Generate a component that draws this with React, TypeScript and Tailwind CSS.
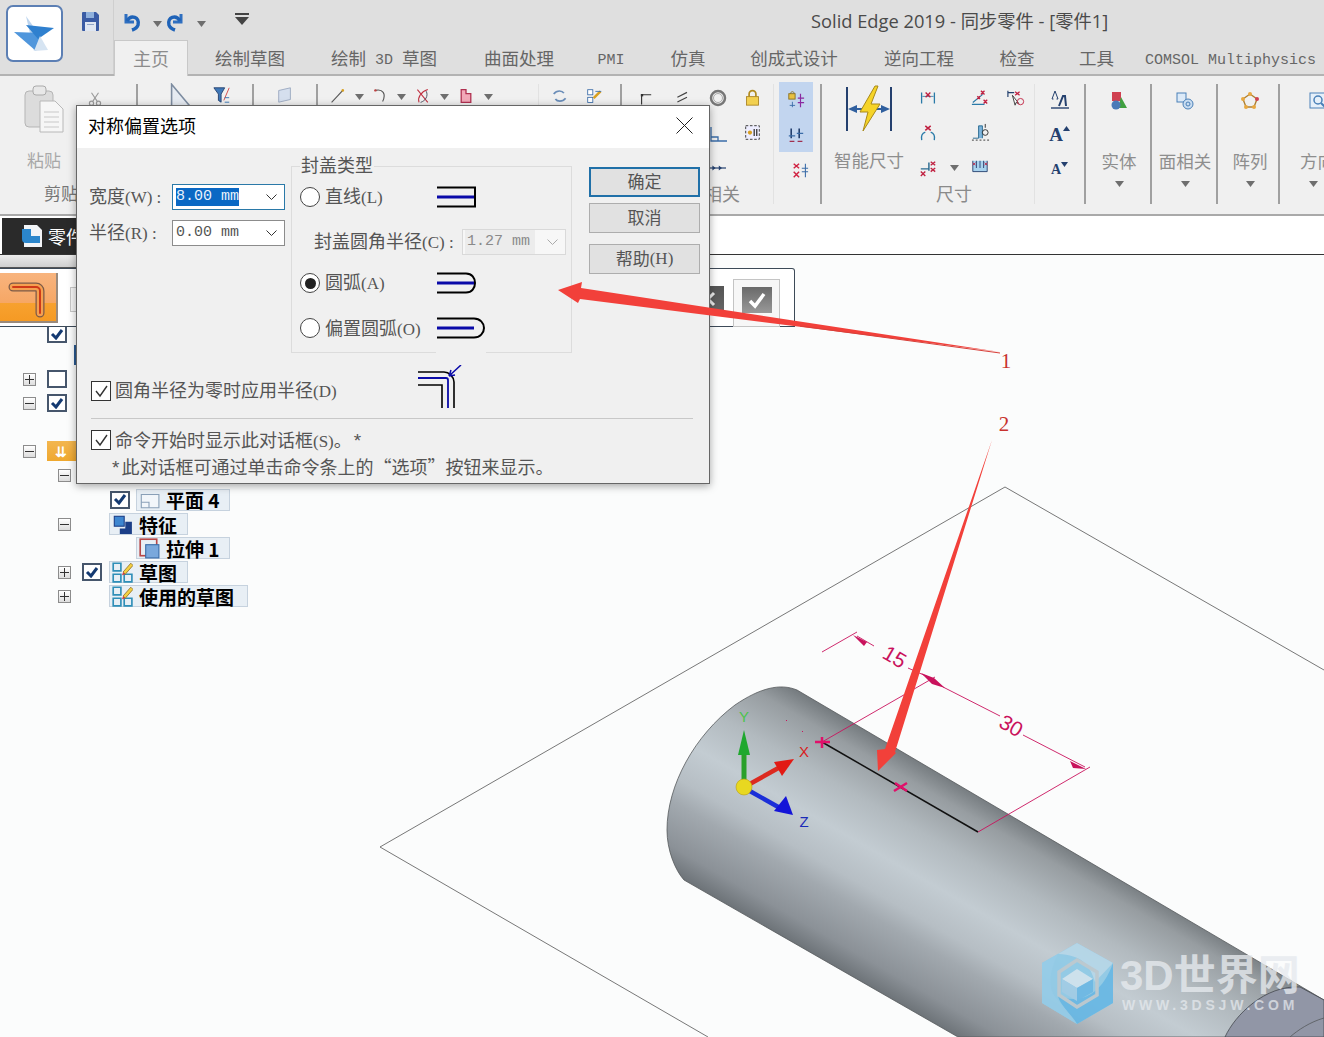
import React from "react";

const Ico: React.FC<{ s?: number; children: React.ReactNode }> = ({ s = 20, children }) => (
  <svg width={s} height={s} viewBox="0 0 20 20" fill="none" className="block shrink-0">
    {children}
  </svg>
);

const Lat: React.FC<{ children: React.ReactNode }> = ({ children }) => (
  <span className="font-['Liberation_Serif',serif] text-[17px] leading-none">{children}</span>
);

const Star = () => <span className="font-['Liberation_Mono',monospace] text-[19px] leading-none">*</span>;

const Drop = () => (
  <svg width="9" height="6" viewBox="0 0 9 6" className="block shrink-0">
    <path d="M0 0h9L4.5 6z" fill="#6e6e6e" />
  </svg>
);

const Sep = () => <div className="w-[2px] h-[120px] mt-[8px] bg-[#a0a0a0] shrink-0" />;
const FaintSep = () => <div className="w-px h-[120px] mt-[8px] bg-[#e2e2e2] shrink-0" />;

const Cell: React.FC<{ children?: React.ReactNode }> = ({ children }) => (
  <div className="h-[35px] flex items-center justify-center">{children}</div>
);

const Logo = () => (
  <svg width="46" height="42" viewBox="0 0 46 42">
    <path d="M14 3l14 20-6 15z" fill="#bcd4ee" />
    <path d="M2 19l22 19 6-18z" fill="#4f96dc" />
    <path d="M14 12L42 15 26 26z" fill="#2f80cf" />
    <path d="M28 23l8 14-14 1z" fill="#d6e4f2" />
  </svg>
);

const SmartDim = () => (
  <svg width="48" height="48" viewBox="0 0 48 48">
    <path d="M2 2v44M46 2v44" stroke="#24406e" strokeWidth="2" />
    <path d="M3 24l9-4v8zM45 24l-9-4v8z" fill="#2f5f9e" />
    <path d="M12 24h5M31 24h5" stroke="#2f5f9e" strokeWidth="2" />
    <path d="M30 1L15 27h8l-5 19 17-27h-9l7-18z" fill="#f6d428" stroke="#a8891a" strokeWidth="1" />
  </svg>
);

const BigTool: React.FC<{ w: string; label: string; icon: React.ReactNode }> = ({ w, label, icon }) => (
  <div className={`${w} shrink-0 flex flex-col items-center`}>
    <div className="h-[20px] mt-[15px]">{icon}</div>
    <div className="mt-[37px] h-[26px] text-[17.5px] leading-[26px] whitespace-nowrap text-[#8e8e8e]">{label}</div>
    <div className="mt-[7px]">
      <Drop />
    </div>
  </div>
);

const Ribbon = () => (
  <div className="h-[140px] shrink-0 bg-[#f0f0f0] border-b-2 border-[#a9a9a9] flex overflow-hidden">
    {/* clipboard */}
    <div className="w-[136px] shrink-0">
      <div className="h-[100px] flex pt-[9px] pl-[24px]">
        <div className="w-[40px] flex flex-col items-center">
          <svg width="40" height="48" viewBox="0 0 40 48">
            <rect x="1" y="6" width="28" height="36" rx="4" fill="#dcdcdc" stroke="#b5b5b5" />
            <rect x="9" y="1" width="13" height="9" rx="3" fill="#e8e8e8" stroke="#aaa" />
            <path d="M16 16h15l8 8v23H16z" fill="#f6f6f6" stroke="#b8b8b8" />
            <path d="M20 27h15M20 32h15M20 37h15M20 42h15" stroke="#c8c8c8" />
          </svg>
          <div className="mt-[15px] text-[17px] leading-[24px] text-[#a8a8a8] whitespace-nowrap">粘贴</div>
        </div>
        <div className="ml-[24px] mt-[7px]">
          <Ico s={14}>
            <path d="M5 1l8 12M15 1L7 13" stroke="#9a9a9a" strokeWidth="1.6" />
            <circle cx="5" cy="16" r="3" stroke="#9a9a9a" strokeWidth="1.6" />
            <circle cx="15" cy="16" r="3" stroke="#9a9a9a" strokeWidth="1.6" />
          </Ico>
        </div>
      </div>
      <div className="pl-[44px] pt-[5px] text-[17px] leading-[24px] text-[#777]">剪贴板</div>
    </div>
    <Sep />
    <div className="w-[114px] shrink-0 flex pt-[7px]">
      <div className="ml-[30px]">
        <Ico s={24}>
          <path d="M3 1l15 18H3z" stroke="#7d8ca0" strokeWidth="1.3" fill="#e6ebf2" />
        </Ico>
      </div>
      <div className="ml-[21px] mt-[3px]">
        <Ico s={18}>
          <path d="M1 2h12L9 9v9L6 16V9z" fill="#3f78b8" stroke="#24406e" />
          <path d="M12 16l6-14" stroke="#d04040" />
          <path d="M13 13h5M13 18h5" stroke="#3070b0" />
        </Ico>
      </div>
    </div>
    <Sep />
    <div className="w-[62px] shrink-0 flex justify-center pt-[10px]">
      <Ico s={18}>
        <path d="M3 5l13-3v13L3 18z" fill="#d5dfee" stroke="#9aa8c0" />
      </Ico>
    </div>
    <Sep />
    <div className="w-[220px] shrink-0 flex items-start pt-[12px] pl-[12px]">
      <Ico s={16}>
        <path d="M2 18L16 3" stroke="#555" strokeWidth="1.4" />
        <circle cx="16" cy="3" r="1.6" fill="#d8a020" />
      </Ico>
      <div className="ml-[9px] mt-[6px]">
        <Drop />
      </div>
      <div className="ml-[9px]">
        <Ico s={16}>
          <path d="M3 3c9-2 14 4 9 14" stroke="#555" strokeWidth="1.4" />
          <circle cx="3" cy="3" r="1.5" fill="#c04040" />
        </Ico>
      </div>
      <div className="ml-[8px] mt-[6px]">
        <Drop />
      </div>
      <div className="ml-[9px]">
        <Ico s={16}>
          <path d="M3 2l13 16M16 2C7 5 3 12 5 18" stroke="#c03040" strokeWidth="1.3" />
          <path d="M14 4c3 6-1 12-7 14" stroke="#445" strokeWidth="1.1" />
        </Ico>
      </div>
      <div className="ml-[9px] mt-[6px]">
        <Drop />
      </div>
      <div className="ml-[9px]">
        <Ico s={16}>
          <path d="M4 2h6v5h6v11H4z" fill="#f2a8b8" stroke="#b03050" strokeWidth="1.6" />
        </Ico>
      </div>
      <div className="ml-[10px] mt-[6px]">
        <Drop />
      </div>
    </div>
    <FaintSep />
    <div className="w-[81px] shrink-0 flex items-start pt-[12px] pl-[13px] gap-[17px]">
      <Ico s={17}>
        <path d="M2 7c4-5 10-4 12-1M16 12c-4 5-10 4-12 1" stroke="#6a8db8" strokeWidth="2" />
      </Ico>
      <Ico s={17}>
        <rect x="2" y="2" width="6" height="6" fill="#fff" stroke="#3a6ca8" />
        <rect x="2" y="11" width="6" height="6" fill="#fff" stroke="#3a6ca8" />
        <path d="M9 12l8-8" stroke="#d8a020" strokeWidth="3" />
        <path d="M11 4h7" stroke="#3a6ca8" />
      </Ico>
    </div>
    <Sep />
    {/* constraints */}
    <div className="w-[151px] shrink-0 flex flex-col">
      <div className="h-[100px] pt-[4px] pl-[8px] grid grid-cols-[35px_35px_35px_35px] content-start">
        <Cell>
          <Ico s={16}>
            <path d="M2 18V6h12" stroke="#333" strokeWidth="1.4" />
            <rect x="1" y="5" width="3" height="3" fill="#333" />
          </Ico>
        </Cell>
        <Cell>
          <Ico s={16}>
            <path d="M3 9l12-6M3 15l12-6" stroke="#444" strokeWidth="1.5" />
          </Ico>
        </Cell>
        <Cell>
          <Ico s={20}>
            <circle cx="10" cy="10" r="7" stroke="#777" strokeWidth="2.5" />
            <circle cx="10" cy="10" r="4.5" stroke="#aaa" strokeWidth="1" />
          </Ico>
        </Cell>
        <Cell>
          <Ico s={17}>
            <path d="M6 9V6a4 4 0 018 0v3" stroke="#b08a20" strokeWidth="2" />
            <rect x="3" y="9" width="14" height="10" fill="#f2d050" stroke="#a88020" />
          </Ico>
        </Cell>
        <Cell />
        <Cell />
        <Cell>
          <Ico s={20}>
            <path d="M3 4v14h16M3 14h7v4" stroke="#3a6ca8" strokeWidth="1.3" />
          </Ico>
        </Cell>
        <Cell>
          <Ico s={17}>
            <rect x="2" y="2" width="16" height="16" fill="#eef" stroke="#222" strokeDasharray="3 2" />
            <circle cx="7" cy="10" r="2.5" fill="#d8a020" />
            <path d="M12 6v8M15 6v8" stroke="#333" strokeWidth="1.5" />
          </Ico>
        </Cell>
        <Cell />
        <Cell />
        <Cell>
          <Ico s={16}>
            <path d="M0 10h20" stroke="#24406e" strokeWidth="1.5" />
            <path d="M3 7l4 3-4 3zM11 7l4 3-4 3z" fill="#24406e" />
          </Ico>
        </Cell>
      </div>
      <div className="pl-[82px] pt-[5px] text-[18px] leading-[24px] text-[#8a8a8a]">相关</div>
    </div>
    <FaintSep />
    <div className="w-[46px] shrink-0 pl-[5px] pt-[6px]">
      <div className="w-[34px] h-[70px] bg-[#c2d5ef]">
        <Cell>
          <Ico s={18}>
            <rect x="2" y="3" width="7" height="6" fill="#e8c040" stroke="#887020" />
            <path d="M4 3c0-3 4-3 4 0" stroke="#887020" />
            <path d="M12 8h7M12 13h7M15 3v15" stroke="#8a2aa0" strokeWidth="1.3" />
            <path d="M6 12v6M3 16h6" stroke="#3a6ca8" />
          </Ico>
        </Cell>
        <Cell>
          <Ico s={16}>
            <path d="M4 2v12M14 2v12" stroke="#24406e" strokeWidth="2" />
            <path d="M1 11h8M11 8h8" stroke="#3a6ca8" strokeWidth="1.5" />
            <path d="M2 18h6M12 18h6" stroke="#a03050" strokeWidth="1.5" />
          </Ico>
        </Cell>
      </div>
      <Cell>
        <Ico s={18}>
          <path d="M3 3l6 5M9 3L3 8M3 12l6 6M9 12l-6 6" stroke="#d02040" strokeWidth="1.6" />
          <path d="M12 8h7M12 12h7M16 3v15" stroke="#3a6ca8" strokeWidth="1.2" />
        </Ico>
      </Cell>
    </div>
    <Sep />
    {/* dimensions */}
    <div className="w-[212px] shrink-0 flex flex-col">
      <div className="h-[100px] flex pl-[2px]">
        <div className="w-[90px] shrink-0 flex flex-col items-center pt-[9px]">
          <SmartDim />
          <div className="mt-[14px] text-[17.5px] leading-[26px] text-[#8e8e8e] whitespace-nowrap">智能尺寸</div>
        </div>
        <div className="w-[28px] pt-[4px] shrink-0">
          <Cell>
            <Ico s={16}>
              <path d="M2 3v14M18 3v14" stroke="#2a7aa8" strokeWidth="1.6" />
              <path d="M3 8h14" stroke="#2a7aa8" />
              <path d="M7 3l6 6M13 3L7 9" stroke="#c02040" strokeWidth="1.7" />
            </Ico>
          </Cell>
          <Cell>
            <Ico s={18}>
              <path d="M3 18c-1-5 1-8 4-9M17 18c1-5-1-8-4-9" stroke="#2a7aa8" strokeWidth="1.5" />
              <path d="M7 2l6 5M13 2L7 7" stroke="#c02040" strokeWidth="1.7" />
            </Ico>
          </Cell>
          <Cell>
            <Ico s={18}>
              <path d="M2 11h9M11 4v9" stroke="#2a6a90" strokeWidth="1.6" />
              <path d="M13 3l5 4M18 3l-5 4M13 10l5 4M18 10l-5 4M2 14l5 5M7 14l-5 5" stroke="#c02040" strokeWidth="1.5" />
            </Ico>
          </Cell>
        </div>
        <div className="w-[24px] pt-[4px] shrink-0">
          <Cell />
          <Cell />
          <Cell>
            <Drop />
          </Cell>
        </div>
        <div className="w-[28px] pt-[4px] shrink-0">
          <Cell>
            <Ico s={18}>
              <path d="M1 17h14M2 15L13 6" stroke="#2a7aa8" strokeWidth="1.3" />
              <path d="M11 2l4 4M15 2l-4 4M14 12l4 4M18 12l-4 4M7 8l3 3M10 8l-3 3" stroke="#c02040" strokeWidth="1.5" />
            </Ico>
          </Cell>
          <Cell>
            <Ico s={19}>
              <path d="M2 16h6V3h4v13" fill="#7db4dc" stroke="#2a6a90" />
              <path d="M1 18h18" stroke="#333" strokeDasharray="2 2" />
              <circle cx="15" cy="10" r="3" stroke="#333" />
              <path d="M15 1v4" stroke="#333" />
            </Ico>
          </Cell>
          <Cell>
            <Ico s={18}>
              <path d="M2 2v12h16V2" fill="#a8d2ee" stroke="#24406e" />
              <path d="M6 2v8M10 2v8M14 2v8" stroke="#24406e" />
              <path d="M2 4l3 3M5 4L2 7M15 4l3 3M18 4l-3 3" stroke="#c02040" />
            </Ico>
          </Cell>
        </div>
        <div className="w-[36px] pt-[4px] pl-[8px] shrink-0">
          <Cell>
            <Ico s={18}>
              <path d="M1 2v7M1 4h7" stroke="#24406e" strokeWidth="1.3" />
              <path d="M9 3l5 4M14 3L9 7" stroke="#c02040" strokeWidth="1.4" />
              <path d="M6 7l7 9-3-1-1 3z" fill="#fff" stroke="#333" />
              <circle cx="15" cy="14" r="3.5" stroke="#c02040" />
            </Ico>
          </Cell>
        </div>
      </div>
      <div className="pl-[114px] pt-[5px] text-[18px] leading-[24px] text-[#8a8a8a]">尺寸</div>
    </div>
    <FaintSep />
    <div className="w-[49px] shrink-0 pt-[6px] flex flex-col items-center font-['Liberation_Serif',serif] font-bold text-[#24406e]">
      <Cell>
        <Ico s={20}>
          <path d="M5 1L2 9h1.5M5 1l3 8H6.5" stroke="#24406e" />
          <path d="M9 16l4-10h2l1 10" stroke="#24406e" strokeWidth="2" />
          <path d="M1 18h18" stroke="#24406e" strokeWidth="1.4" />
        </Ico>
      </Cell>
      <Cell>
        <span className="text-[19px] leading-none">A</span>
        <svg width="7" height="5" viewBox="0 0 7 5" className="-mt-[12px]">
          <path d="M0 5l3.5-5L7 5z" fill="#24406e" />
        </svg>
      </Cell>
      <Cell>
        <span className="text-[14px] leading-none">A</span>
        <svg width="7" height="5" viewBox="0 0 7 5" className="-mt-[10px]">
          <path d="M0 0h7L3.500 5z" fill="#24406e" />
        </svg>
      </Cell>
    </div>
    <Sep />
    <BigTool
      w="w-[64px] pl-[2px]"
      label="实体"
      icon={
        <Ico s={20}>
          <rect x="3" y="1" width="9" height="9" fill="#d04050" />
          <path d="M12 6l6 11H9z" fill="#40a040" />
          <circle cx="7" cy="14" r="4.500" fill="#4a7ab8" />
        </Ico>
      }
    />
    <Sep />
    <BigTool
      w="w-[64px] pl-[2px]"
      label="面相关"
      icon={
        <Ico s={20}>
          <rect x="2" y="2" width="9" height="9" fill="#dceaf8" stroke="#4a80b8" />
          <circle cx="13" cy="13" r="5" fill="#c8dcf0" stroke="#4a80b8" />
          <circle cx="13" cy="13" r="2" stroke="#4a80b8" />
        </Ico>
      }
    />
    <Sep />
    <BigTool
      w="w-[60px] pl-[4px]"
      label="阵列"
      icon={
        <Ico s={20}>
          <path d="M10 3l7 5-3 8H6L3 8z" stroke="#b08030" strokeWidth="1.4" />
          <circle cx="10" cy="3" r="2" fill="#e8a840" />
          <circle cx="17" cy="8" r="2" fill="#d04050" />
          <circle cx="14" cy="16" r="2" fill="#e8a840" />
          <circle cx="6" cy="16" r="2" fill="#e8a840" />
          <circle cx="3" cy="8" r="2" fill="#e8a840" />
        </Ico>
      }
    />
    <Sep />
    <div className="w-[60px] shrink-0 pt-[15px] pl-[20px]">
      <div className="ml-[9px]">
        <Ico s={20}>
          <rect x="1" y="2" width="18" height="15" fill="#e6f0fa" stroke="#4a80b8" />
          <circle cx="9" cy="9" r="4" stroke="#4a80b8" strokeWidth="1.5" />
          <path d="M12 12l4 4" stroke="#4a80b8" strokeWidth="2" />
        </Ico>
      </div>
      <div className="mt-[37px] h-[26px] text-[17.5px] leading-[26px] whitespace-nowrap text-[#8e8e8e]">方向</div>
      <div className="mt-[7px] ml-[9px]">
        <Drop />
      </div>
    </div>
  </div>
);

const MONO_TAB = "block pt-[5px] leading-[20px] font-['Liberation_Mono',monospace] text-[15px]";

const TITLE_TABS = [
  { label: "绘制草图", w: "w-[124px]" },
  {
    label: (
      <>
        绘制<span className={`${MONO_TAB} mx-[9px]`}>3D</span>草图
      </>
    ),
    w: "w-[144px]",
  },
  { label: "曲面处理", w: "w-[126px]" },
  { label: <span className={MONO_TAB}>PMI</span>, w: "w-[58px]" },
  { label: "仿真", w: "w-[96px]" },
  { label: "创成式设计", w: "w-[116px]" },
  { label: "逆向工程", w: "w-[134px]" },
  { label: "检查", w: "w-[62px]" },
  { label: "工具", w: "w-[97px]" },
  { label: <span className={MONO_TAB}>COMSOL Multiphysics</span>, w: "w-[171px]" },
];

const Header = () => (
  <div className="h-[76px] shrink-0 bg-[#dfdfdf] border-b-2 border-[#b3b3b3] flex">
    <div className="w-[113px] shrink-0 flex items-start pl-[6px] pt-[5px]">
      <div className="w-[57px] h-[57px] rounded-[7px] bg-white border-2 border-[#5c7fb4] flex items-center justify-center">
        <Logo />
      </div>
      <div className="ml-[19px] mt-[7px]">
        <svg width="17" height="19" viewBox="0 0 17 19">
          <path d="M1 0h13l3 3v15a1 1 0 01-1 1H1a1 1 0 01-1-1V1a1 1 0 011-1z" fill="#3a5ba4" />
          <rect x="4" y="0" width="8" height="6" fill="#8fb0dc" />
          <rect x="3" y="10" width="11" height="9" fill="#dfe6f2" />
          <rect x="5" y="12" width="7" height="1" fill="#8fa4c8" />
        </svg>
      </div>
    </div>
    <div className="flex-1 flex flex-col border-l border-[#cfcfcf]">
      <div className="h-[40px] flex items-start">
        <div className="ml-[8px] mt-[11px]">
          <svg width="19" height="21" viewBox="0 0 19 21">
            <path d="M4 3v8h8" stroke="#2f6fc0" strokeWidth="3" fill="none" />
            <path d="M5 10c4-7 13-4 11 4-1 3-3 4-6 5" stroke="#1f63b8" strokeWidth="3.500" fill="none" />
          </svg>
        </div>
        <div className="ml-[12px] mt-[21px]">
          <Drop />
        </div>
        <div className="ml-[4px] mt-[11px]">
          <svg width="19" height="21" viewBox="0 0 19 21">
            <path d="M15 3v8H7" stroke="#2f6fc0" strokeWidth="3" fill="none" />
            <path d="M14 10C10 3 1 6 3 14c1 3 3 4 6 5" stroke="#1f63b8" strokeWidth="3.500" fill="none" />
          </svg>
        </div>
        <div className="ml-[12px] mt-[21px]">
          <Drop />
        </div>
        <div className="ml-[29px] mt-[13px]">
          <svg width="14" height="12" viewBox="0 0 14 12">
            <path d="M0 0h14v2H0zM0 4h14L7 12z" fill="#444" />
          </svg>
        </div>
        <div className="ml-[562px] mt-[8px] font-['Open_Sans','Noto_Sans_CJK_SC',sans-serif] text-[#4a4a4a] text-[18.3px] leading-[26px] whitespace-nowrap">
          Solid Edge 2019 - 同步零件 - [零件1]
        </div>
      </div>
      <div className="h-[34px] flex items-start">
        <div className="w-[74px] h-[36px] bg-[#f0f0f0] border border-b-0 border-[#c8c8c8] flex items-center justify-center text-[18px] text-[#8c8c8c]">
          主页
        </div>
        {TITLE_TABS.map((t, i) => (
          <div key={i} className={`${t.w} h-[36px] flex items-center justify-center text-[17.5px] whitespace-nowrap text-[#666]`}>
            {t.label}
          </div>
        ))}
      </div>
    </div>
  </div>
);

const DocBar = () => (
  <>
    <div className="h-[39px] shrink-0 bg-white pt-[2px] pl-[2px] border-b border-[#333]">
      <div className="w-[300px] h-[36px] bg-[#2a2a2a] flex items-center pl-[20px] gap-[5px] text-white text-[18px]">
        <svg width="21" height="24" viewBox="0 0 21 24">
          <path d="M2 1h13l5 5v17H2z" fill="#f2f4f7" />
          <path d="M0 5h9v7h9v7H4a4 4 0 01-4-4z" fill="#2b86cc" />
        </svg>
        零件1
      </div>
    </div>
    <div className="h-[72px] shrink-0 bg-[#fbfcfc]">
      <div className="w-[400px] h-[13px] bg-gradient-to-b from-[#ececec] to-[#cfcfcf] border-b border-[#555]" />
      <div className="w-[795px] h-[59px] bg-white border-y border-r border-[#3d4a58] rounded-tr-[3px] flex items-start justify-between">
        <div className="flex items-start pt-[4px]">
          <div className="w-[58px] h-[50px] bg-[linear-gradient(#f8b47e_0%,#f6a765_62%,#f7a12f_63%,#f59a24_100%)] border-r-2 border-b-2 border-[#9a8a7c] flex items-center justify-center">
            <svg width="46" height="44" viewBox="0 0 46 44" fill="none">
              <path d="M8 12H31a4 4 0 014 4V38" stroke="#7b5a48" strokeWidth="9" strokeLinecap="round" />
              <path d="M8 12H31a4 4 0 014 4V38" stroke="#f5a050" strokeWidth="6.500" strokeLinecap="round" />
              <path d="M8 12H31a4 4 0 014 4V38" stroke="#d03a18" strokeWidth="2" strokeLinecap="round" />
            </svg>
          </div>
          <div className="ml-[12px] mt-[14px] w-[80px] h-[25px] border border-[#c8c8c8] bg-[#f6f6f6]" />
        </div>
        <div className="flex items-start pr-[14px]">
          <div className="mt-[17px] w-[26px] h-[26px] bg-gradient-to-b from-[#555] to-[#666] flex items-center justify-center">
            <svg width="12" height="16" viewBox="0 0 12 16" fill="none">
              <path d="M9 2L3 8l6 6" stroke="#eee" strokeWidth="3" />
            </svg>
          </div>
          <div className="ml-[9px] mt-[10px] w-[47px] h-[48px] border border-[#c4c4c4] bg-[#f7f7f7] flex justify-center pt-[7px]">
            <div className="w-[30px] h-[26px] bg-gradient-to-b from-[#6a6a6a] to-[#999] flex items-center justify-center">
              <svg width="20" height="18" viewBox="0 0 20 18" fill="none">
                <path d="M3 10l5 5L17 3" stroke="#fff" strokeWidth="3.500" />
              </svg>
            </div>
          </div>
        </div>
      </div>
    </div>
  </>
);

const Expander: React.FC<{ plus?: boolean }> = ({ plus }) => (
  <div className="w-[13px] h-[13px] shrink-0 border border-[#8c8c8c] bg-gradient-to-b from-[#fff] to-[#ddd] flex items-center justify-center">
    <svg width="9" height="9" viewBox="0 0 9 9">
      <path d={plus ? "M0 4.500h9M4.500 0v9" : "M0 4.500h9"} stroke="#333" strokeWidth="1" />
    </svg>
  </div>
);

const TreeCheck: React.FC<{ on?: boolean }> = ({ on }) => (
  <div className="w-[20px] h-[18px] shrink-0 border-2 border-[#46566c] bg-white flex items-center justify-center">
    {on && (
      <svg width="14" height="11" viewBox="0 0 14 11" fill="none">
        <path d="M2 5l4 4 6-8" stroke="#143a72" strokeWidth="3" />
      </svg>
    )}
  </div>
);

const NodeLabel: React.FC<{ icon: React.ReactNode; text: string; w: string }> = ({ icon, text, w }) => (
  <div className={`${w} h-[22px] shrink-0 bg-[#e8eff5] border border-[#c6d2de] flex items-center pl-[1px] gap-[6px] font-bold text-[19px] leading-none text-black whitespace-nowrap`}>
    {icon}
    {text}
  </div>
);

const SketchIcon = () => (
  <Ico s={22}>
    <path d="M2 2h7v7H2zM2 12h7v7H2zM12 12h7v7h-7z" stroke="#2f8fb8" strokeWidth="1.500" />
    <path d="M11 10l7-8 2 2-7 8z" fill="#f4d040" stroke="#8a6a20" strokeWidth="0.700" />
    <path d="M11 10l-1 3 3-1" fill="#d04040" />
  </Ico>
);

const Tree = () => (
  <div className="relative flex flex-col">
    <div className="h-[16px] pl-[47px] overflow-hidden flex items-end">
      <TreeCheck on />
    </div>
    <div className="h-[24px] pl-[74px] flex items-center">
      <div className="w-[4px] h-[20px] border-l-2 border-y border-[#2a5a90]" />
    </div>
    <div className="h-[24px] pl-[23px] flex items-center">
      <Expander plus />
      <div className="ml-[11px]">
        <TreeCheck />
      </div>
    </div>
    <div className="h-[24px] pl-[23px] flex items-center">
      <Expander />
      <div className="ml-[11px]">
        <TreeCheck on />
      </div>
    </div>
    <div className="h-[24px]" />
    <div className="h-[24px] pl-[23px] flex items-center">
      <Expander />
      <div className="ml-[11px] w-[32px] h-[20px] bg-gradient-to-b from-[#f3b64e] to-[#efa82e] flex items-center pl-[8px] text-white font-bold text-[14px] leading-none">
        ⇊
      </div>
    </div>
    <div className="h-[24px] pl-[58px] flex items-center">
      <Expander />
    </div>
    <div className="h-[25px] pl-[110px] flex items-center">
      <TreeCheck on />
      <div className="ml-[6px]">
        <NodeLabel
          w="w-[94px]"
          text="平面 4"
          icon={
            <Ico s={22}>
              <path d="M3 5h16v12H3z" fill="#f2f6fa" stroke="#8aa0b8" />
              <path d="M3 12h7v5" stroke="#8aa0b8" />
            </Ico>
          }
        />
      </div>
    </div>
    <div className="h-[24px] pl-[58px] flex items-center">
      <Expander />
      <div className="ml-[38px]">
        <NodeLabel
          w="w-[79px]"
          text="特征"
          icon={
            <Ico s={22}>
              <rect x="3" y="3" width="9" height="9" fill="#3e86d0" stroke="#1c3f88" />
              <path d="M13 8h6v11H8v-5h5z" fill="#1c3f88" />
            </Ico>
          }
        />
      </div>
    </div>
    <div className="h-[24px] pl-[136px] flex items-center">
      <NodeLabel
        w="w-[94px]"
        text="拉伸 1"
        icon={
          <Ico s={22}>
            <rect x="2" y="2" width="15" height="15" stroke="#b84848" strokeWidth="1.500" />
            <rect x="7" y="7" width="12" height="12" fill="#7aa8dc" stroke="#3a6ca8" />
          </Ico>
        }
      />
    </div>
    <div className="h-[24px] pl-[58px] flex items-center">
      <Expander plus />
      <div className="ml-[11px]">
        <TreeCheck on />
      </div>
      <div className="ml-[7px]">
        <NodeLabel w="w-[79px]" text="草图" icon={<SketchIcon />} />
      </div>
    </div>
    <div className="h-[24px] pl-[58px] flex items-center">
      <Expander plus />
      <div className="ml-[38px]">
        <NodeLabel w="w-[139px]" text="使用的草图" icon={<SketchIcon />} />
      </div>
    </div>
  </div>
);

const DIM = "#c9125c";

const Model = () => (
  <svg className="absolute inset-0 w-full h-full" viewBox="0 327 1324 710" fill="none">
    <defs>
      <linearGradient id="cyl" gradientUnits="userSpaceOnUse" x1="900" y1="749" x2="790" y2="940">
        <stop offset="0" stopColor="#747a7e" />
        <stop offset="0.1" stopColor="#979da1" />
        <stop offset="0.28" stopColor="#b2babf" />
        <stop offset="0.46" stopColor="#c3ccd2" />
        <stop offset="0.62" stopColor="#b6bec4" />
        <stop offset="0.72" stopColor="#a2a9af" />
        <stop offset="0.9" stopColor="#8b9197" />
        <stop offset="1" stopColor="#6e7479" />
      </linearGradient>
    </defs>
    <path d="M1005 487L380 847L708 1037M1005 487L1324 670" stroke="#555" strokeWidth="0.8" />
    <path
      d="M797 690C780 683 760 688 735 705C695 735 667 785 667 830C667 850 675 870 684 880L958 1037H1324V1000Z"
      fill="url(#cyl)"
      stroke="#55595c"
      strokeWidth="0.8"
    />
    <path d="M1225 1037C1235 1015 1265 985 1300 987L1324 1000V1037Z" fill="#9196a6" stroke="#44484e" strokeWidth="0.8" />
    <path d="M1290 1037C1298 1030 1310 1022 1324 1018" stroke="#55595c" strokeWidth="0.8" />
    {/* sketch line + dimensions */}
    <path d="M822 742L978 832" stroke="#111" strokeWidth="1.500" />
    <g stroke={DIM} strokeWidth="0.9">
      <path d="M822 652L857 632M822 742L935 677M978 832L1090 767" />
      <path d="M857 636L874 646M908 668L935 680M943 687L1000 716M1023 735L1085 767" />
    </g>
    <path d="M853 635L867 642L864 646Z M921 673L934 678L945 688L932 684Z M1070 761L1086 769L1073 768Z" fill={DIM} />
    <path d="M815 742H830M822 737V748M894 791L907 783M895 783L907 791" stroke="#e0106a" strokeWidth="2.500" />
    <text x="894" y="664" transform="rotate(30 894 658)" textAnchor="middle" fontSize="21" fill={DIM} fontFamily="Liberation Sans, sans-serif">
      15
    </text>
    <text x="1011" y="733" transform="rotate(30 1011 726)" textAnchor="middle" fontSize="21" fill={DIM} fontFamily="Liberation Sans, sans-serif">
      30
    </text>
    <path d="M786 720l1 1M802 731l1 1" stroke={DIM} />
    {/* triad */}
    <path d="M744 785V750" stroke="#2aa02a" strokeWidth="5" />
    <path d="M744 730L750 755H738Z" fill="#1fa82e" />
    <path d="M748 785L782 766" stroke="#dc2a20" strokeWidth="4.500" />
    <path d="M794 759L774 762L782 776Z" fill="#e21a14" />
    <path d="M748 790L780 808" stroke="#1b2fd8" strokeWidth="4.500" />
    <path d="M793 815L786 796L774 811Z" fill="#1414d8" />
    <circle cx="744" cy="787" r="8" fill="#e8d820" stroke="#b8a010" strokeWidth="0.600" />
    <g fontSize="15" fontFamily="Liberation Sans, sans-serif" textAnchor="middle">
      <text x="744" y="722" fill="#4cc44c">Y</text>
      <text x="804" y="757" fill="#d82020">X</text>
      <text x="804" y="827" fill="#1a2ab8">Z</text>
    </g>
    {/* watermark */}
    <g opacity="0.9">
      <path d="M1077 943L1113 963V1003L1077 1024L1042 1003V963Z" fill="#8fcbe8" />
      <path d="M1077 943L1113 963L1095 982C1090 965 1082 955 1058 954Z" fill="#b5d8ea" />
      <path d="M1113 963V1003L1077 1024C1072 1015 1060 1005 1058 996C1075 1003 1100 1000 1113 963Z" fill="#65b8e6" />
      <path d="M1042 963L1058 954C1048 975 1048 990 1058 1000L1077 1024L1042 1003Z" fill="#93cdea" />
      <path d="M1077 960L1097 972V995L1077 1007L1059 995V972Z" stroke="#bcc9d0" strokeWidth="3.500" />
      <path d="M1077 969L1093 979L1077 988L1062 979Z" fill="#cfe4f0" />
      <path d="M1062 979L1077 988V1001L1062 992Z" fill="#9fcde8" />
      <path d="M1093 979L1077 988V1001L1093 992Z" fill="#68b8e6" />
    </g>
    <text x="1120" y="990" fontSize="42" fontWeight="700" fill="#e6eaee" opacity="0.78" fontFamily="Liberation Sans, Noto Sans CJK SC, sans-serif">
      3D世界网
    </text>
    <text x="1122" y="1010" fontSize="14" fontWeight="700" letterSpacing="3.800" fill="#e6eaee" opacity="0.72" fontFamily="Liberation Sans, sans-serif">
      WWW.3DSJW.COM
    </text>
  </svg>
);

const Radio: React.FC<{ on?: boolean }> = ({ on }) => (
  <div className="w-[20px] h-[20px] shrink-0 rounded-full border border-[#444] bg-white flex items-center justify-center">
    {on && <div className="w-[11px] h-[11px] rounded-full bg-[#222]" />}
  </div>
);

const DlgCheck = () => (
  <div className="w-[20px] h-[20px] shrink-0 border border-[#333] bg-white flex items-center justify-center">
    <svg width="15" height="13" viewBox="0 0 15 13" fill="none">
      <path d="M2 6l4 5 7-10" stroke="#333" strokeWidth="1.400" />
    </svg>
  </div>
);

const Chevron: React.FC<{ color?: string }> = ({ color = "#333" }) => (
  <svg width="11" height="7" viewBox="0 0 11 7" fill="none" className="shrink-0">
    <path d="M0.500 0.500l5 5 5-5" stroke={color} />
  </svg>
);

const CapIcon: React.FC<{ kind: "line" | "arc" | "offset" }> = ({ kind }) => (
  <svg width="50" height="22" viewBox="0 0 50 22" fill="none" className="shrink-0">
    {kind === "line" && <path d="M0 1.500H38V20.500H0" stroke="#000" strokeWidth="2" />}
    {kind === "arc" && <path d="M0 1.500H29C35 1.500 38 6 38 11S35 20.500 29 20.500H0" stroke="#000" strokeWidth="2" />}
    {kind === "offset" && <path d="M0 1.500H37C43 1.500 47 6 47 11S43 20.500 37 20.500H0" stroke="#000" strokeWidth="2" />}
    <path d="M0 11H37" stroke="#0a0aa8" strokeWidth="3" />
  </svg>
);

const BTN = "w-[111px] h-[30px] pb-[2px] bg-[#e1e1e1] flex items-center justify-center text-[17px] text-[#555]";

const Dialog = () => (
  <div className="absolute left-[76px] top-[105px] w-[634px] h-[379px] bg-[#f0f0f0] border border-[#666] shadow-[0_2px_8px_rgba(0,0,0,0.35)] text-[18px] leading-[24px] text-[#555]">
    <div className="h-[42px] bg-white flex items-center justify-between pb-[4px] pl-[11px] pr-[16px] text-black">
      <span>对称偏置选项</span>
      <svg width="17" height="17" viewBox="0 0 17 17" fill="none">
        <path d="M0.500 0.500l16 16M16.500 0.500l-16 16" stroke="#222" />
      </svg>
    </div>
    <div className="flex h-[205px]">
      <div className="ml-[12px] w-[196px] pt-[36px] flex flex-col gap-[10px]">
        <div className="h-[26px] flex items-center">
          <div className="w-[83px] pb-[4px] whitespace-nowrap">
            宽度<Lat>(W) :</Lat>
          </div>
          <div className="w-[113px] h-[26px] bg-white border border-[#2a79a8] flex items-center justify-between pl-[3px] pr-[7px]">
            <span className="bg-[#0a68c4] text-[#e8f2fc] font-['Liberation_Mono',monospace] text-[15px] leading-[18px] whitespace-nowrap">8.00 mm</span>
            <Chevron />
          </div>
        </div>
        <div className="h-[26px] flex items-center">
          <div className="w-[83px] pb-[4px] whitespace-nowrap">
            半径<Lat>(R) :</Lat>
          </div>
          <div className="w-[113px] h-[26px] bg-white border border-[#8c8c8c] flex items-center justify-between pl-[3px] pr-[7px]">
            <span className="font-['Liberation_Mono',monospace] text-[15px] whitespace-nowrap">0.00 mm</span>
            <Chevron />
          </div>
        </div>
      </div>
      <div className="relative ml-[6px] mt-[18px] w-[281px] h-[187px] border border-[#dcdcdc] pt-[17px]">
        <div className="absolute -top-[15px] left-[8px] bg-[#f0f0f0] px-[1px]">封盖类型</div>
        <div className="h-[26px] pl-[8px] flex items-center">
          <Radio />
          <div className="ml-[5px] w-[112px] pb-[4px] whitespace-nowrap">
            直线<Lat>(L)</Lat>
          </div>
          <CapIcon kind="line" />
        </div>
        <div className="mt-[19px] h-[26px] pl-[22px] flex items-center">
          <div className="w-[148px] pb-[4px] whitespace-nowrap">
            封盖圆角半径<Lat>(C) :</Lat>
          </div>
          <div className="w-[104px] h-[26px] bg-[#f7f7f7] border border-[#d9d9d9] flex items-center justify-between pl-[2px] pr-[7px]">
            <span className="bg-[#ececec] w-[70px] pl-[2px] font-['Liberation_Mono',monospace] text-[15px] text-[#8a8a8a] whitespace-nowrap">1.27 mm</span>
            <Chevron color="#aaa" />
          </div>
        </div>
        <div className="mt-[15px] h-[26px] pl-[8px] flex items-center">
          <Radio on />
          <div className="ml-[5px] w-[112px] pb-[4px] whitespace-nowrap">
            圆弧<Lat>(A)</Lat>
          </div>
          <CapIcon kind="arc" />
        </div>
        <div className="mt-[19px] h-[26px] pl-[8px] flex items-center">
          <Radio />
          <div className="ml-[5px] w-[112px] pb-[2px] whitespace-nowrap">
            偏置圆弧<Lat>(O)</Lat>
          </div>
          <CapIcon kind="offset" />
        </div>
        <div className="absolute -bottom-[1px] left-[144px] w-[50px] h-px bg-[#f0f0f0]" />
      </div>
      <div className="ml-[17px] mt-[19px] flex flex-col">
        <div className={`${BTN} border-2 border-[#2070a8]`}>确定</div>
        <div className={`${BTN} border border-[#adadad] mt-[6px]`}>取消</div>
        <div className={`${BTN} border border-[#adadad] mt-[11px]`}>
          帮助<Lat>(H)</Lat>
        </div>
      </div>
    </div>
    <div className="mt-[12px] h-[43px] pl-[14px] flex items-start">
      <div className="mt-[16px]">
        <DlgCheck />
      </div>
      <div className="ml-[4px] mt-[12px] w-[303px] whitespace-nowrap">
        圆角半径为零时应用半径<Lat>(D)</Lat>
      </div>
      <svg width="44" height="43" viewBox="0 0 44 43" fill="none" className="shrink-0">
        <path d="M0 7H26C31 7 36 12 36 17V43M0 20H24V43" stroke="#000" strokeWidth="1.600" />
        <path d="M0 13H28C29 13 30 14 30 15V43" stroke="#0a0aa8" strokeWidth="1.800" />
        <path d="M43 0L31 11M31 11l2-6M31 11l6-1" stroke="#0a0aa8" strokeWidth="1.500" />
      </svg>
    </div>
    <div className="mt-[10px] ml-[14px] w-[602px] border-t border-[#c8c8c8]" />
    <div className="mt-[9px] h-[24px] pl-[14px] flex items-center">
      <DlgCheck />
      <div className="ml-[4px] pb-[2px] whitespace-nowrap">
        命令开始时显示此对话框<Lat>(S)</Lat>。<Star />
      </div>
    </div>
    <div className="mt-[2px] h-[24px] pl-[33px] whitespace-nowrap">
      <Star />此对话框可通过单击命令条上的“选项”按钮来显示。
    </div>
  </div>
);

const Annotations = () => (
  <svg className="absolute inset-0 w-full h-full pointer-events-none" viewBox="0 0 1324 1037" fill="none">
    <path d="M558 290L582 282L581 288L1000 352L580 299L578 303Z" fill="#f2403a" />
    <path d="M800 326L1000 353" stroke="#d8403a" strokeWidth="1" />
    <path d="M878 771L877 750L885 749L992 440L895 752L896 753Z" fill="#f2403a" />
    <g fontSize="21" fill="#c8322e" fontFamily="Liberation Serif, serif" textAnchor="middle">
      <text x="1006" y="368">1</text>
      <text x="1004" y="431">2</text>
    </g>
  </svg>
);

export default function App() {
  return (
    <div
      lang="zh-CN"
      className="relative w-[1324px] h-[1037px] overflow-hidden flex flex-col bg-[#fbfcfc] font-['Noto_Sans_CJK_SC','Noto_Sans',sans-serif]"
    >
      <Header />
      <Ribbon />
      <DocBar />
      <div className="relative flex-1">
        <Model />
        <Tree />
      </div>
      <Dialog />
      <Annotations />
    </div>
  );
}
